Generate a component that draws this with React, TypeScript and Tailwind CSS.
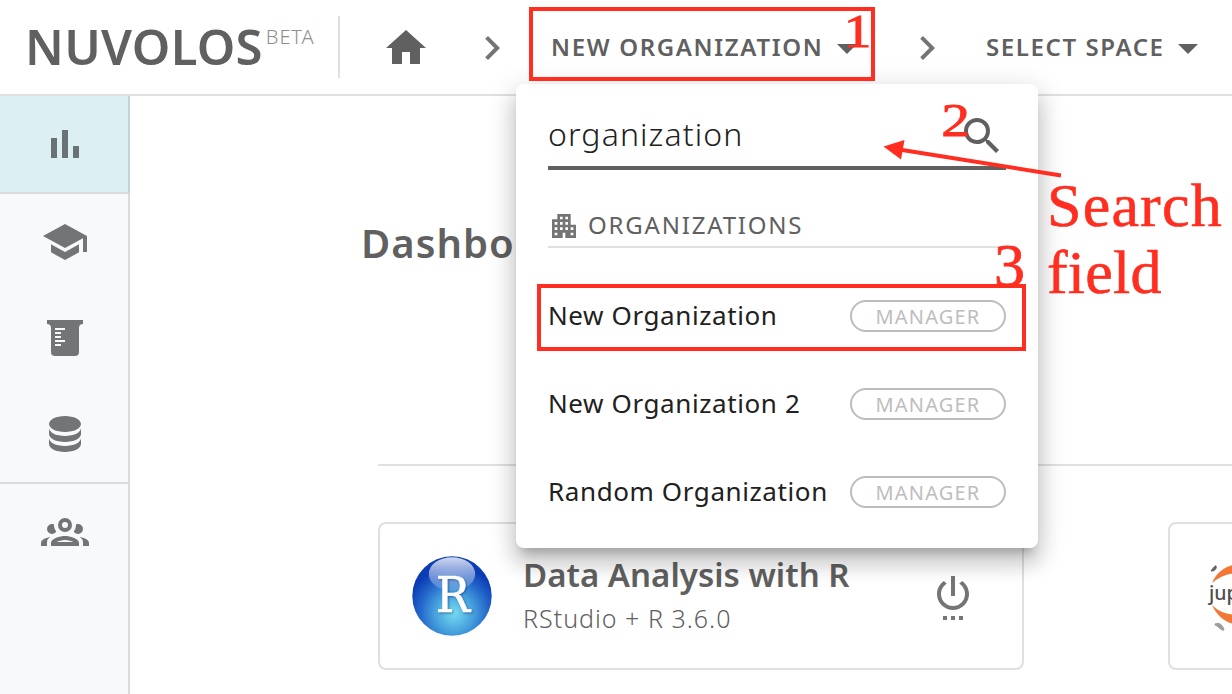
import React from "react";

const paths = {
  home: "M10,20V14H14V20H19V12H22L12,3L2,12H5V20H10Z",
  chevron: "M8.59,16.58L13.17,12L8.59,7.41L10,6L16,12L10,18L8.59,16.58Z",
  menuDown: "M7,10L12,15L17,10H7Z",
  chart: "M5,8H8V18H5ZM10.5,4H13.5V18H10.5ZM16,12H19V18H16Z",
  school: "M5 13.18v4L12 21l7-3.82v-4L12 17l-7-3.82zM12 3L1 9l11 6 9-4.91V17h2V9L12 3z",
  beaker:
    "M3,3H21V5A2,2 0 0,0 19,7V19A2,2 0 0,1 17,21H7A2,2 0 0,1 5,19V7A2,2 0 0,0 3,5V3M7,7V8H12V7H7M7,9V10H10V9H7M7,11V12H10V11H7M7,13V14H12V13H7M7,15V16H10V15H7Z",
  database:
    "M12,3C7.58,3 4,4.79 4,7C4,9.21 7.58,11 12,11C16.42,11 20,9.21 20,7C20,4.79 16.42,3 12,3M4,9V12C4,14.21 7.58,16 12,16C16.42,16 20,14.21 20,12V9C20,11.21 16.42,13 12,13C7.58,13 4,11.21 4,9M4,14V17C4,19.21 7.58,21 12,21C16.42,21 20,19.21 20,17V14C20,16.21 16.42,18 12,18C7.58,18 4,16.21 4,14Z",
  group:
    "M12,5A3.5,3.5 0 0,0 8.5,8.5A3.5,3.5 0 0,0 12,12A3.5,3.5 0 0,0 15.5,8.5A3.5,3.5 0 0,0 12,5M12,7A1.5,1.5 0 0,1 13.5,8.5A1.5,1.5 0 0,1 12,10A1.5,1.5 0 0,1 10.5,8.5A1.5,1.5 0 0,1 12,7M5.5,8A2.5,2.5 0 0,0 3,10.5C3,11.44 3.53,12.25 4.29,12.68C4.65,12.88 5.06,13 5.5,13C5.94,13 6.35,12.88 6.71,12.68C7.08,12.47 7.39,12.17 7.62,11.81C6.89,10.86 6.5,9.7 6.5,8.5C6.5,8.41 6.5,8.31 6.5,8.22C6.2,8.08 5.86,8 5.5,8M18.5,8C18.14,8 17.8,8.08 17.5,8.22C17.5,8.31 17.5,8.41 17.5,8.5C17.5,9.7 17.11,10.86 16.38,11.81C16.5,12 16.63,12.15 16.78,12.3C16.94,12.45 17.1,12.58 17.29,12.68C17.65,12.88 18.06,13 18.5,13C18.94,13 19.35,12.88 19.71,12.68C20.47,12.25 21,11.44 21,10.5A2.5,2.5 0 0,0 18.5,8M12,14C9.66,14 5,15.17 5,17.5V19H19V17.5C19,15.17 14.34,14 12,14M4.71,14.55C2.78,14.78 0,15.76 0,17.5V19H3V17.07C3,16.06 3.69,15.22 4.71,14.55M19.29,14.55C20.31,15.22 21,16.06 21,17.07V19H24V17.5C24,15.76 21.22,14.78 19.29,14.55M12,16C13.53,16 15.24,16.5 16.23,17H7.77C8.76,16.5 10.47,16 12,16Z",
  search:
    "M9.5,3A6.5,6.5 0 0,1 16,9.5C16,11.11 15.41,12.59 14.44,13.73L14.71,14H15.5L20.5,19L19,20.5L14,15.5V14.71L13.73,14.44C12.59,15.41 11.11,16 9.5,16A6.5,6.5 0 0,1 3,9.5A6.5,6.5 0 0,1 9.5,3M9.5,5C7,5 5,7 5,9.5C5,12 7,14 9.5,14C12,14 14,12 14,9.5C14,7 12,5 9.5,5Z",
  building:
    "M17 11V3H7v4H3v14h8v-4h2v4h8V11h-4zM7 19H5v-2h2v2zm0-4H5v-2h2v2zm0-4H5V9h2v2zm4 4H9v-2h2v2zm0-4H9V9h2v2zm0-4H9V5h2v2zm4 8h-2v-2h2v2zm0-4h-2V9h2v2zm0-4h-2V5h2v2zm4 12h-2v-2h2v2zm0-4h-2v-2h2v2z",
  power:
    "M7,24H9V22H7V24M11,24H13V22H11V24M13,2H11V12H13V2M16.56,4.44L15.11,5.89C16.84,6.94 18,8.83 18,11A6,6 0 0,1 12,17A6,6 0 0,1 6,11C6,8.83 7.16,6.94 8.88,5.88L7.44,4.44C5.36,5.88 4,8.28 4,11A8,8 0 0,0 12,19A8,8 0 0,0 20,11C20,8.28 18.64,5.88 16.56,4.44M15,24H17V22H15V24Z",
};

function Icon({ name, className = "" }: { name: keyof typeof paths; className?: string }) {
  return (
    <svg viewBox="0 0 24 24" fill="currentColor" className={`size-12 shrink-0 ${className}`}>
      <path fillRule="evenodd" d={paths[name]} />
    </svg>
  );
}

function Header() {
  return (
    <header className="flex h-24 shrink-0 items-center border-b-2 border-[#e0e0e0] text-[#606060]">
      <div className="flex w-[338px] shrink-0 whitespace-nowrap pb-0.5 pl-[25px]">
        <span className="text-[49px] leading-[60px] font-semibold tracking-[0.3px]">NUVOLOS</span>
        <span className="ml-[3px] pt-[7px] text-[20px] leading-[28px] font-light tracking-[0.9px] text-[#8e8e8e]">BETA</span>
      </div>
      <div className="h-[62px] w-0.5 shrink-0 bg-[#e0e0e0]" />
      <Icon name="home" className="mt-0.5 ml-[41.5px]" />
      <Icon name="chevron" className="mt-0.5 ml-[38.5px] text-[#747474]" />
      <div className="ml-[35px] w-[272px] shrink-0 whitespace-nowrap text-[24px] leading-8 font-semibold tracking-[1.65px]">
        NEW ORGANIZATION
      </div>
      <Icon name="menuDown" className="mt-0.5" />
      <Icon name="chevron" className="mt-0.5 ml-8 text-[#747474]" />
      <div className="ml-[35px] w-[178px] shrink-0 whitespace-nowrap text-[24px] leading-8 font-semibold tracking-[1.6px]">
        SELECT SPACE
      </div>
      <Icon name="menuDown" className="mt-0.5" />
    </header>
  );
}

function Sidebar() {
  const cell = "flex h-24 items-center justify-center pl-0.5";
  return (
    <nav className="flex w-[130px] shrink-0 flex-col border-r-2 border-[#dadbdc] bg-[#f8f9fb] text-[#737476]">
      <div className="-mr-0.5 flex h-[98px] items-center justify-center border-r-2 border-b-2 border-r-[#c4d2d5] border-b-[#d9dbdc] bg-[#dceff3] pl-0.5 text-[#697274]">
        <Icon name="chart" className="mt-1" />
      </div>
      <div className={cell}><Icon name="school" /></div>
      <div className={cell}><Icon name="beaker" /></div>
      <div className={cell}><Icon name="database" /></div>
      <div className="-mr-0.5 h-0.5 bg-[#d9dbdc]" />
      <div className={cell}><Icon name="group" /></div>
    </nav>
  );
}

function RStudioLogo() {
  return (
    <svg viewBox="0 0 80 80" className="size-20 shrink-0">
      <defs>
        <radialGradient id="ball" cx="42" cy="57" r="47" gradientUnits="userSpaceOnUse">
          <stop offset="0" stopColor="#75dcf2" />
          <stop offset="0.42" stopColor="#459fdc" />
          <stop offset="0.72" stopColor="#2467ca" />
          <stop offset="1" stopColor="#0b3bb5" />
        </radialGradient>
        <linearGradient id="gloss" x1="0" y1="0" x2="0" y2="1">
          <stop offset="0" stopColor="#fff" stopOpacity="0.8" />
          <stop offset="1" stopColor="#fff" stopOpacity="0.12" />
        </linearGradient>
      </defs>
      <circle cx="40" cy="40" r="39.7" fill="url(#ball)" />
      <ellipse cx="40" cy="18" rx="23.2" ry="16.8" fill="url(#gloss)" />
      <text
        x="24"
        y="55.5"
        fontFamily="DejaVu Serif"
        fontSize="48"
        fill="#fff"
        stroke="#fff"
        strokeWidth="0.7"
        textLength="34"
        lengthAdjust="spacingAndGlyphs"
        className="[filter:drop-shadow(1px_1px_1px_rgba(20,60,120,.6))]"
      >
        R
      </text>
    </svg>
  );
}

function JupyterLogo() {
  return (
    <svg viewBox="0 0 80 80" className="size-20 shrink-0">
      <path d="M9,27C15,13 27,8 39,8S63,14 68,27C59,19 49,16.5 39,16.5S18,19 9,27Z" fill="#f37735" />
      <path d="M9,49C15,63 27,69 39,69S63,63 68,49C59,57 49,59 39,59S18,58 9,49Z" fill="#f37735" />
      <path d="M8,15C10,12 13,9 13,10C14,12 12,15 9,15Z" fill="#616161" stroke="#616161" />
      <path d="M12,68C16,66 20,69 21,74C18,75 15,70 12,69Z" fill="#9e9e9e" stroke="#9e9e9e" />
      <text x="6" y="43.500" fontFamily="Noto Sans" fontSize="19.500" fontWeight="500" fill="#4e4e4e">jupyter</text>
    </svg>
  );
}

function Dashboard() {
  return (
    <main className="min-w-0 flex-1 overflow-hidden pl-[231px]">
      <h1 className="pt-[119px] text-[40px] leading-[56px] font-semibold tracking-[1px] text-[#606060]">Dashboard</h1>
      <div className="mt-[193px] ml-[17px] h-0.5 bg-[#e0e0e0]" />
      <div className="mt-14 ml-[17px] flex w-[1436px] gap-36">
        <div className="flex h-[148px] w-[646px] shrink-0 items-center rounded-lg border-2 border-[#e0e0e0] pl-8">
          <RStudioLogo />
          <div className="ml-[31px] w-[406px] pb-[3px] whitespace-nowrap">
            <div className="text-[33px] leading-[46px] font-semibold tracking-[0.02px] text-[#606060]">Data Analysis with R</div>
            <div className="text-[25px] leading-10 font-light tracking-[1px] text-[#606060]">RStudio + R 3.6.0</div>
          </div>
          <Icon name="power" className="text-[#757575]" />
        </div>
        <div className="flex h-[148px] w-[646px] shrink-0 items-center rounded-lg border-2 border-[#e0e0e0] pl-[33px]">
          <JupyterLogo />
        </div>
      </div>
    </main>
  );
}

function OrganizationMenu() {
  return (
    <div className="absolute top-[84px] left-[516px] h-[464px] w-[522px] rounded-lg bg-white px-8 whitespace-nowrap shadow-[0_10px_10px_-6px_rgba(0,0,0,.2),0_16px_20px_2px_rgba(0,0,0,.14),0_6px_28px_4px_rgba(0,0,0,.12)]">
      <div className="flex h-[86px] items-center justify-between border-b-4 border-[#606060] pt-5">
        <span className="pb-0.5 text-[32px] leading-[44px] font-light tracking-[1.1px] text-[#212121]">organization</span>
        <Icon name="search" className="mt-0.5 text-[#606060]" />
      </div>
      <div className="flex h-[78px] items-center border-b-2 border-[#e0e0e0] pt-8 text-[#606060]">
        <Icon name="building" className="!size-8 mt-1 text-[#757575]" />
        <span className="mt-0.5 ml-2 text-[24px] leading-8 tracking-[1.8px]">ORGANIZATIONS</span>
      </div>
      <div className="flex flex-col pt-[24px]">
        {["New Organization", "New Organization 2", "Random Organization"].map((name) => (
          <div key={name} className="flex h-[88px] items-center justify-between">
            <span className="pb-[3px] text-[26px] leading-9 tracking-[0.6px] text-[#212121]">{name}</span>
            <span className="flex h-8 w-[156px] items-center justify-center rounded-full border-2 border-[#bdbdbd] pt-0.5 text-[20px] leading-7 tracking-[1.2px] text-[#bdbdbd]">
              MANAGER
            </span>
          </div>
        ))}
      </div>
    </div>
  );
}

function Annotations() {
  return (
    <div className="pointer-events-none absolute inset-0 font-['Liberation_Serif',serif] text-[#ff2e20]">
      <div className="absolute top-[7px] left-[529px] h-[74px] w-[346px] border-4 border-[#ff2e20]" />
      <div className="absolute top-[284px] left-[537px] h-[67px] w-[489px] border-4 border-[#ff2e20]" />
      <svg viewBox="0 0 200 50" className="absolute top-[136px] left-[876px] h-[50px] w-[200px]" fill="currentColor">
        <path d="M185,39.5L20,13" stroke="currentColor" strokeWidth="4" />
        <path d="M7.500,10.500L28.500,4L25,23.500Z" />
      </svg>
      <span className="absolute top-[9px] left-[846px] scale-x-120 text-[46px] leading-[46px] [-webkit-text-stroke:1px_#ff2e20]">1</span>
      <span className="absolute top-[98px] left-[944px] scale-x-125 text-[46px] leading-[46px] [-webkit-text-stroke:0.8px_#ff2e20]">2</span>
      <span className="absolute top-[234px] left-[994px] text-[62px] leading-[62px] [-webkit-text-stroke:0.8px_#ff2e20]">3</span>
      <div className="absolute top-[172px] left-[1047px] text-[62px] leading-[67px] [-webkit-text-stroke:0.6px_#ff2e20]">
        <div className="tracking-[1.2px]">Search</div>
        <div className="tracking-[0.2px]">field</div>
      </div>
    </div>
  );
}

export default function App() {
  return (
    <div className="relative flex h-[694px] w-[1232px] flex-col overflow-hidden bg-white font-['Noto_Sans',sans-serif]">
      <Header />
      <div className="flex min-h-0 flex-1">
        <Sidebar />
        <Dashboard />
      </div>
      <OrganizationMenu />
      <Annotations />
    </div>
  );
}
